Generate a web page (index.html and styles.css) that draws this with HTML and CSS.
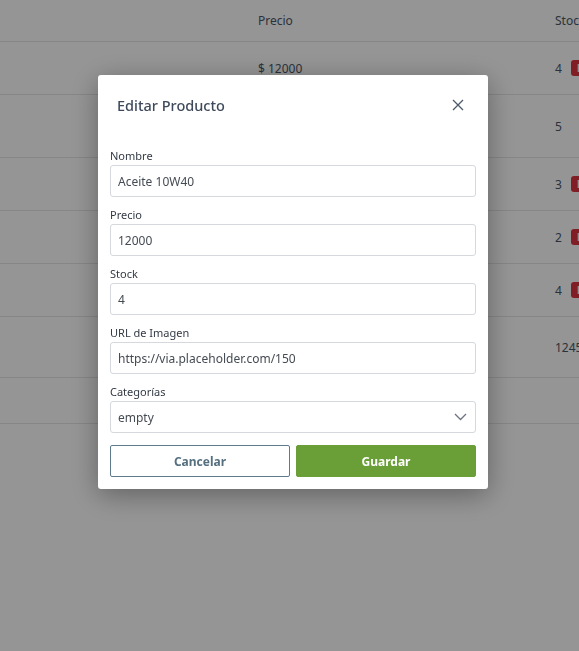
FILE: index.html
```html
<!DOCTYPE html>
<html lang="es">
<head>
<meta charset="utf-8">
<title>Editar Producto</title>
<link rel="stylesheet" href="styles.css">
</head>
<body>
<div class="table">
  <div class="row head"><div class="cell"></div><div class="cell">Precio</div><div class="cell">Stock</div></div>
  <div class="row r1"><div class="cell"></div><div class="cell">$ 12000</div><div class="cell"><span>4</span><span class="badge">Bajo</span></div></div>
  <div class="row r2"><div class="cell"></div><div class="cell"></div><div class="cell"><span>5</span></div></div>
  <div class="row r1"><div class="cell"></div><div class="cell"></div><div class="cell"><span>3</span><span class="badge">Bajo</span></div></div>
  <div class="row r1"><div class="cell"></div><div class="cell"></div><div class="cell"><span>2</span><span class="badge">Bajo</span></div></div>
  <div class="row r1"><div class="cell"></div><div class="cell"></div><div class="cell"><span>4</span><span class="badge">Bajo</span></div></div>
  <div class="row r3"><div class="cell"></div><div class="cell"></div><div class="cell"><span>12455</span></div></div>
  <div class="row r4"><div class="cell"></div><div class="cell"></div><div class="cell"></div></div>
</div>

<div class="overlay">
  <div class="modal">
    <div class="modal-header">
      <h2 class="modal-title">Editar Producto</h2>
      <button class="close" aria-label="Cerrar">
        <svg width="12" height="12" viewBox="0 0 12 12"><path d="M1 1 L11 11 M11 1 L1 11" stroke="#4b5a6b" stroke-width="1.3" fill="none"/></svg>
      </button>
    </div>
    <div class="modal-body">
      <div class="field">
        <label class="label">Nombre</label>
        <div class="input">Aceite 10W40</div>
      </div>
      <div class="field">
        <label class="label">Precio</label>
        <div class="input">12000</div>
      </div>
      <div class="field">
        <label class="label">Stock</label>
        <div class="input">4</div>
      </div>
      <div class="field">
        <label class="label">URL de Imagen</label>
        <div class="input">https://via.placeholder.com/150</div>
      </div>
      <div class="field">
        <label class="label">Categorías</label>
        <div class="input select"><span>empty</span>
          <svg width="13" height="8" viewBox="0 0 13 8"><path d="M1 1 L6.5 6.5 L12 1" stroke="#6b7480" stroke-width="1.3" fill="none"/></svg>
        </div>
      </div>
      <div class="actions">
        <button class="btn btn-cancel">Cancelar</button>
        <button class="btn btn-save">Guardar</button>
      </div>
    </div>
  </div>
</div>
</body>
</html>
```
FILE: styles.css
```css
html, body {
  margin: 0;
  padding: 0;
  height: 100%;
  overflow: hidden;
}
body {
  background: #fff;
  font-family: "Noto Sans", "Open Sans", sans-serif;
  color: #4a5668;
}
.table {
  width: 760px;
}
.row {
  display: grid;
  grid-template-columns: 250px 297px 213px;
  border-bottom: 1px solid #e6e6e6;
  box-sizing: border-box;
}
.cell {
  padding-left: 8px;
  display: flex;
  align-items: center;
  gap: 8px;
  font-size: 12px;
}
.head { height: 42px; }
.r1 { height: 53px; }
.r2 { height: 63px; }
.r3 { height: 61px; }
.r4 { height: 46px; }
.badge {
  background: #dc3340;
  color: #fff;
  font-size: 10px;
  font-weight: 700;
  padding: 2px 6px;
  margin-left: 1px;
  border-radius: 3px;
  line-height: 12px;
}
.overlay {
  position: fixed;
  inset: 0;
  background: rgba(0, 0, 0, 0.416);
  display: flex;
  justify-content: center;
  align-items: flex-start;
  padding-top: 75px;
  padding-left: 7px;
  box-sizing: border-box;
}
.modal {
  width: 390px;
  background: #fff;
  border-radius: 3px;
  box-shadow: 0 6px 28px rgba(0, 0, 0, 0.35);
  box-sizing: border-box;
}
.modal-header {
  display: flex;
  align-items: center;
  justify-content: space-between;
  height: 60px;
  padding: 0 24px 0 19px;
  box-sizing: border-box;
}
.modal-title {
  margin: 0;
  font-size: 14.5px;
  font-weight: 500;
  color: #3e4a5b;
}
.close {
  border: 0;
  background: none;
  padding: 0;
  display: flex;
  cursor: pointer;
}
.modal-body {
  padding: 13px 12px 12px;
  display: flex;
  flex-direction: column;
}
.field {
  display: flex;
  flex-direction: column;
  margin-bottom: 10px;
}
.label {
  font-size: 11px;
  color: #333a44;
  line-height: 16px;
  height: 17px;
}
.input {
  height: 32px;
  border: 1px solid #d5d8dc;
  border-radius: 3px;
  box-sizing: border-box;
  display: flex;
  align-items: center;
  padding: 0 7px;
  font-size: 12px;
  color: #454b53;
}
.select {
  justify-content: space-between;
  padding-right: 8px;
}
.actions {
  display: flex;
  gap: 6px;
  margin-top: 2px;
}
.btn {
  flex: 1;
  height: 32px;
  border-radius: 2px;
  font-family: "Noto Sans", "Open Sans", sans-serif;
  font-size: 12px;
  font-weight: 700;
  cursor: pointer;
}
.btn-cancel {
  background: #fff;
  border: 1px solid #5f7b8b;
  color: #567080;
}
.btn-save {
  background: #6a9f37;
  border: 1px solid #6a9f37;
  color: #fff;
}
```
